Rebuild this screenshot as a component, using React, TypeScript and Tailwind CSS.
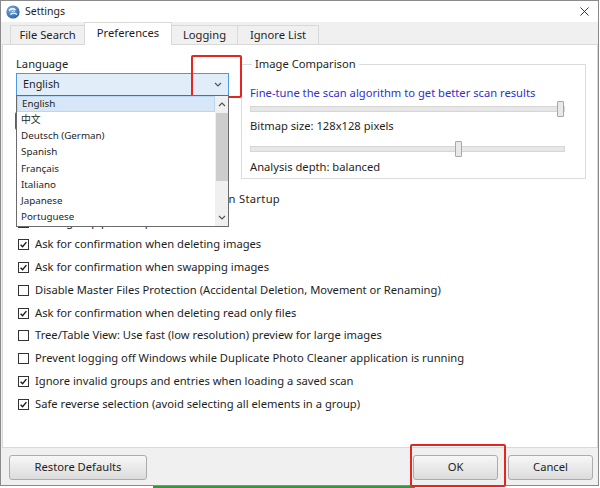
import React from "react";

const languages = [
  "English",
  "中文",
  "Deutsch (German)",
  "Spanish",
  "Français",
  "Italiano",
  "Japanese",
  "Portuguese",
];

const options = [
  { label: "Automatically search for updates on Startup", checked: true, wide: true },
  { label: "Show group preview panel", checked: false },
  { label: "Ask for confirmation when deleting images", checked: true },
  { label: "Ask for confirmation when swapping images", checked: true },
  { label: "Disable Master Files Protection (Accidental Deletion, Movement or Renaming)", checked: false },
  { label: "Ask for confirmation when deleting read only files", checked: true },
  { label: "Tree/Table View: Use fast (low resolution) preview for large images", checked: false },
  { label: "Prevent logging off Windows while Duplicate Photo Cleaner application is running", checked: false },
  { label: "Ignore invalid groups and entries when loading a saved scan", checked: true },
  { label: "Safe reverse selection (avoid selecting all elements in a group)", checked: true },
];

const tabs = [
  { label: "File Search", w: "w-[75px]" },
  { label: "Preferences", w: "w-[88px]", active: true },
  { label: "Logging", w: "w-[67px]" },
  { label: "Ignore List", w: "w-[82px]" },
];

function Chevron({ up = false, className = "" }: { up?: boolean; className?: string }) {
  return (
    <svg viewBox="0 0 8 5" className={className} fill="none">
      <path
        d={up ? "M1 4 L4 1 L7 4" : "M1 1 L4 4 L7 1"}
        stroke="#555"
        strokeWidth="1.2"
      />
    </svg>
  );
}

function AppIcon() {
  return (
    <svg viewBox="0 0 14 14" className="h-[14px] w-[14px]">
      <defs>
        <radialGradient id="ball" cx="40%" cy="35%" r="70%">
          <stop offset="0%" stopColor="#7fb6e6" />
          <stop offset="100%" stopColor="#2a5f9e" />
        </radialGradient>
      </defs>
      <circle cx="7" cy="7" r="6.6" fill="url(#ball)" />
      <path d="M3 5.5 C5 3, 8 3.5, 9.5 5" stroke="#fff" strokeWidth="1.3" fill="none" />
      <path d="M4.5 9.5 C6 8, 9 8, 11 9.5" stroke="#fff" strokeWidth="1.3" fill="none" />
      <path d="M6 7 C7 5.8, 8 5.8, 9 7" stroke="#e9f3ff" strokeWidth="1" fill="none" />
    </svg>
  );
}

function Slider({ pos }: { pos: number }) {
  return (
    <div className="relative h-[16px] w-[315px]">
      <div className="absolute left-0 right-0 top-[5px] h-[6px] border border-[#d6d6d6] bg-[#e7e7e7]" />
      <div
        className="absolute top-0 h-[16px] w-[7px] rounded-[1px] border border-[#a8a8a8] bg-[#e9e9e9]"
        style={{ left: pos }}
      />
    </div>
  );
}

function CheckBox({ checked }: { checked: boolean }) {
  return (
    <div className="flex h-[11px] w-[11px] shrink-0 items-center justify-center border border-[#333] bg-white">
      {checked && (
        <svg viewBox="0 0 10 10" className="h-[9px] w-[9px]" fill="none">
          <path d="M1.8 5.2 L4 7.4 L8.2 2.4" stroke="#1a1a1a" strokeWidth="1.6" />
        </svg>
      )}
    </div>
  );
}

function Button({ children, w }: { children: React.ReactNode; w: string }) {
  return (
    <div
      className={`${w} flex h-[25px] items-center justify-center rounded-[3px] border border-[#acacac] bg-gradient-to-b from-[#f7f7f7] to-[#dcdcdc] text-[11.2px] text-[#1e1e1e]`}
    >
      {children}
    </div>
  );
}

export default function App() {
  return (
    <div className="relative h-[488px] w-[600px] overflow-hidden bg-white font-['Noto_Sans','Noto_Sans_CJK_SC',sans-serif] text-[11.2px] text-[#1e1e1e]">
      <div className="flex h-[486px] w-[599px] flex-col border border-[#8a8a8a] bg-[#f0f0f0]">
        {/* title bar */}
        <div className="flex h-[21px] items-center bg-white pl-[5px] pr-[9px]">
          <AppIcon />
          <span className="ml-[5px] text-[10.5px] leading-none">Settings</span>
          <svg viewBox="0 0 10 10" className="ml-auto h-[9px] w-[9px]" fill="none">
            <path d="M0.5 0.5 L9.5 9.5 M9.5 0.5 L0.5 9.5" stroke="#222" strokeWidth="1" />
          </svg>
        </div>

        {/* tabs */}
        <div className="flex h-[22px] items-end pl-[9px]">
          {tabs.map((t, i) =>
            t.active ? (
              <div
                key={t.label}
                className={`${t.w} relative z-10 -mb-[1px] -ml-[1px] flex h-[23px] items-center justify-center border border-b-0 border-[#d9d9d9] bg-white pb-[1px]`}
              >
                {t.label}
              </div>
            ) : (
              <div
                key={t.label}
                className={`${t.w} ${i > 0 ? "-ml-[1px]" : ""} flex h-[19px] items-center justify-center border border-b-0 border-[#d9d9d9] bg-[#f0f0f0]`}
              >
                {t.label}
              </div>
            )
          )}
        </div>

        {/* content panel */}
        <div className="ml-[1px] h-[404px] border border-[#d9d9d9] bg-white">
          <div className="flex pl-[13px] pt-[11px]">
            {/* language */}
            <div className="relative w-[213px]">
              <div className="h-[17px] leading-[16px]">Language</div>
              <div className="flex h-[23px] items-center justify-between border border-[#4f98df] bg-[#e1eefa] pl-[6px] pr-[6px] text-[10.8px]">
                <span>English</span>
                <Chevron className="h-[5px] w-[8px]" />
              </div>
              <div className="absolute left-0 top-[39px] z-20 flex h-[132px] w-[213px] border border-[#6b6b6b] bg-white text-[9.8px]">
                <div className="flex-1">
                  {languages.map((l, i) => (
                    <div
                      key={l}
                      className={`flex h-[16.2px] items-center pl-[4px] ${
                        i === 0 ? "border border-[#b9d6f2] bg-[#d8e7f7] pl-[3px]" : ""
                      }`}
                    >
                      {l}
                    </div>
                  ))}
                </div>
                <div className="flex w-[13px] flex-col items-center bg-[#f0f0f0]">
                  <div className="flex h-[17px] items-center">
                    <Chevron up className="h-[5px] w-[8px]" />
                  </div>
                  <div className="h-[68px] w-[12px] bg-[#cdcdcd]" />
                  <div className="flex-1" />
                  <div className="flex h-[17px] items-center">
                    <Chevron className="h-[5px] w-[8px]" />
                  </div>
                </div>
              </div>
            </div>

            {/* image comparison */}
            <fieldset className="ml-[12px] w-[344px] border border-[#dcdcdc] pb-[3px] pl-[8px] pr-[20px]">
              <legend className="ml-[2px] px-[3px] leading-[16px]">Image Comparison</legend>
              <div className="mt-[13px] h-[16px] leading-[16px] text-[#3030cf]">
                Fine-tune the scan algorithm to get better scan results
              </div>
              <Slider pos={307} />
              <div className="mt-[1px] h-[16px] leading-[16px]">Bitmap size: 128x128 pixels</div>
              <div className="mt-[7px]">
                <Slider pos={205} />
              </div>
              <div className="mt-[2px] h-[16px] leading-[16px]">Analysis depth: balanced</div>
            </fieldset>
          </div>

          {/* options */}
          <div className="mt-[9px] flex flex-col pl-[15px]">
            {options.map((o) => (
              <div key={o.label} className="flex h-[22.75px] items-center gap-[6px]">
                <CheckBox checked={o.checked} />
                <span className={o.wide ? "tracking-[0.32px]" : ""}>{o.label}</span>
              </div>
            ))}
          </div>
        </div>

        {/* footer */}
        <div className="flex flex-1 items-start pl-[8px] pr-[5px] pt-[7px]">
          <Button w="w-[138px]">Restore Defaults</Button>
          <div className="ml-auto flex gap-[10px]">
            <Button w="w-[85px]">OK</Button>
            <Button w="w-[85px]">Cancel</Button>
          </div>
        </div>
      </div>

      {/* taskbar highlight */}
      <div className="absolute bottom-0 left-[153px] h-[2px] w-[262px] bg-[#2f9a3c]" />

      {/* annotations */}
      <div className="absolute left-[191px] top-[55px] h-[43px] w-[51px] rounded-[2px] border-2 border-[#e5251f]" />
      <div className="absolute left-[15px] top-[112px] h-[18px] w-[55px] rounded-[2px] border-2 border-[#e5251f]" />
      <div className="absolute left-[410px] top-[444px] h-[43px] w-[96px] rounded-[2px] border-2 border-[#e5251f]" />
    </div>
  );
}
